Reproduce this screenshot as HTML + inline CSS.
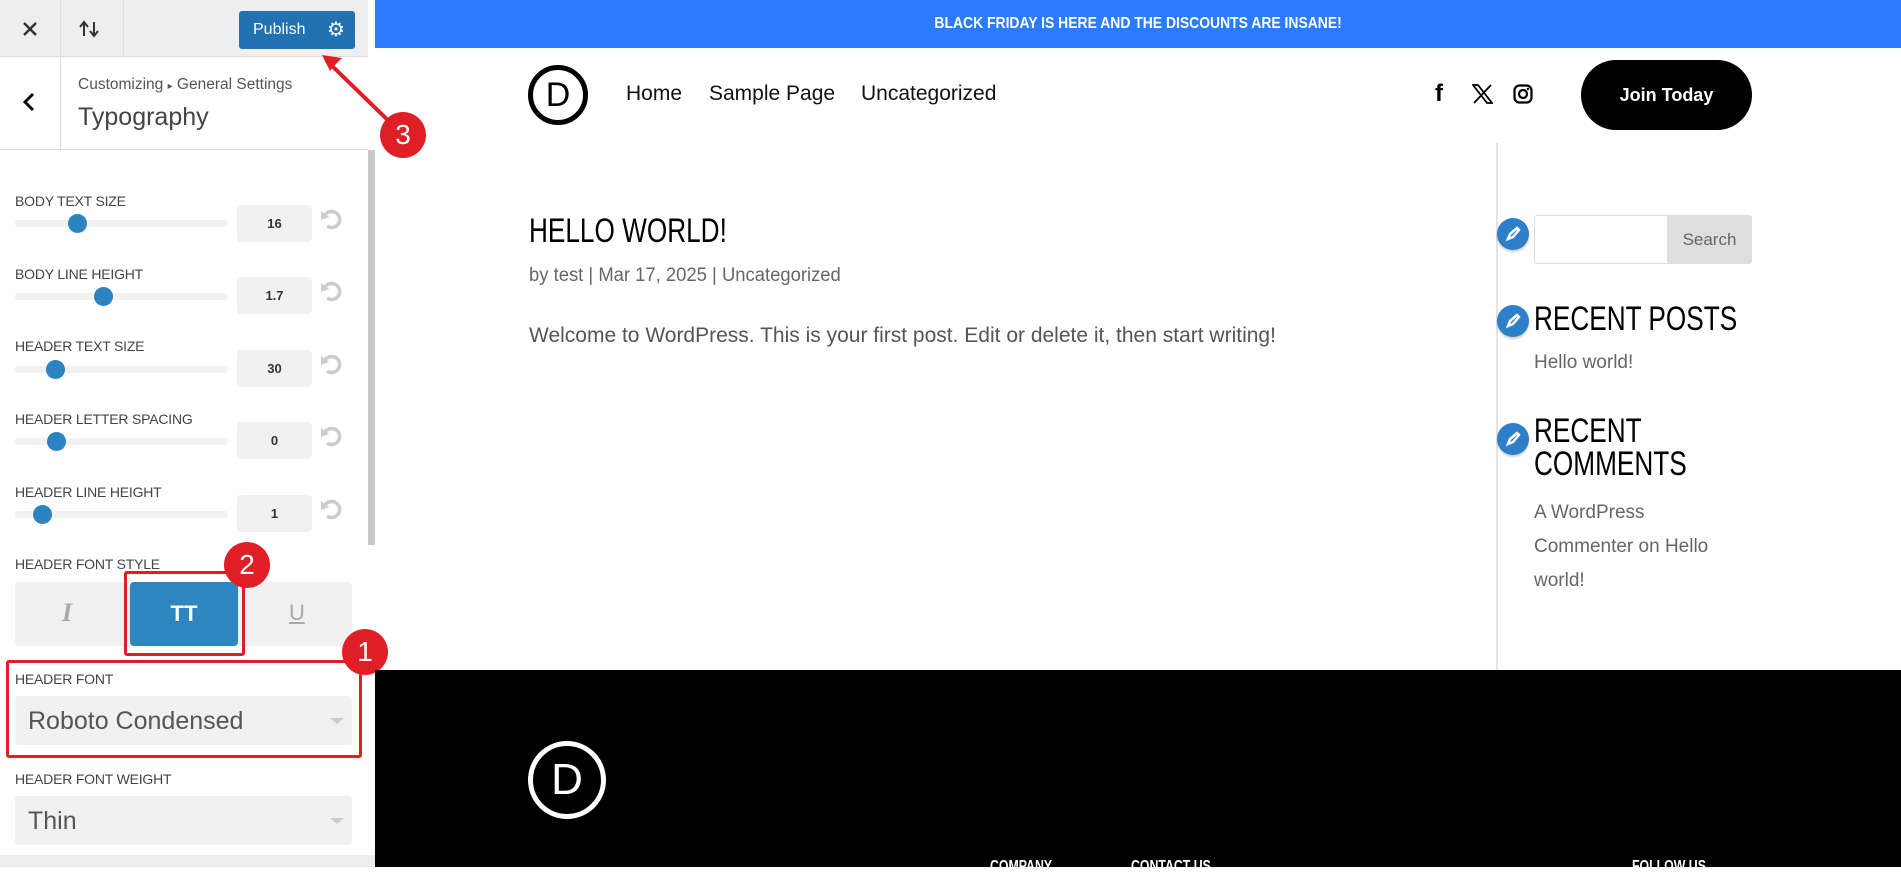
<!DOCTYPE html>
<html><head><meta charset="utf-8"><style>
*{margin:0;padding:0;box-sizing:border-box}
body{width:1901px;height:867px;overflow:hidden;position:relative;font-family:"Liberation Sans",sans-serif;background:#fff}
.a{position:absolute}
.lbl{position:absolute;left:15px;font-size:14px;color:#444;text-transform:uppercase;letter-spacing:-.2px}
.trk{position:absolute;left:15px;width:213px;height:7px;border-radius:4px;background:#f1f1f1}
.th{position:absolute;width:19px;height:19px;border-radius:50%;background:#2b83c0;top:-6px}
.val{position:absolute;left:237px;width:75px;height:37px;background:#f1f1f1;border-radius:4px;font-size:13px;font-weight:bold;color:#333;text-align:center;line-height:37px}
.sq{transform:scaleX(.77);transform-origin:0 0;white-space:nowrap}
.pen{position:absolute;left:1497px;width:32px;height:32px;border-radius:50%;background:#2e7fc9;box-shadow:0 2px 2px rgba(0,0,0,.2)}
.badge{position:absolute;width:46px;height:46px;border-radius:50%;background:#e01e25;color:#fff;font-size:28px;text-align:center;line-height:46px}
</style></head><body>
<div class="a" style="left:0;top:0;width:375px;height:867px;background:#fff"></div>
<div class="a" style="left:0;top:0;width:368px;height:57px;background:#eeeeee;border-bottom:1px solid #ddd"></div>
<div class="a" style="left:60px;top:0;width:1px;height:57px;background:#ddd"></div>
<div class="a" style="left:123px;top:0;width:1px;height:57px;background:#ddd"></div>
<svg class="a" style="left:22px;top:21px" width="16" height="16"><path d="M2 2L14 14M14 2L2 14" stroke="#333" stroke-width="2.5"/></svg>
<svg class="a" style="left:79px;top:20px" width="24" height="18"><path d="M5 16V3M1 7l4-5 4 5M15 2v13M11 11l4 5 4-5" stroke="#333" stroke-width="2" fill="none"/></svg>
<div class="a" style="left:239px;top:11px;width:116px;height:38px;background:#2271b1;border-radius:3px"></div>
<div class="a" style="left:253px;top:21px;color:#fff;font-size:16px">Publish</div>
<div class="a" style="left:327px;top:17px;color:#fff;font-size:20px">⚙</div>
<div class="a" style="left:0;top:57px;width:368px;height:93px;background:#fff;border-bottom:1px solid #ddd"></div>
<div class="a" style="left:60px;top:57px;width:1px;height:93px;background:#ddd"></div>
<svg class="a" style="left:22px;top:92px" width="14" height="20"><path d="M11 2L3 10l8 8" stroke="#111" stroke-width="3" fill="none"/></svg>
<div class="a" style="left:78px;top:76px;font-size:15.5px;color:#555">Customizing <span style="font-size:10px">▸</span> General Settings</div>
<div class="a" style="left:78px;top:103px;font-size:25px;color:#444">Typography</div>
<div class="a" style="left:368px;top:150px;width:7px;height:395px;background:#c9c9c9"></div>

<div class="lbl" style="top:193px">Body Text Size</div>
<div class="trk" style="top:220px"><div class="th" style="left:53px"></div></div>
<div class="val" style="top:205px">16</div>
<div class="lbl" style="top:266px">Body Line Height</div>
<div class="trk" style="top:293px"><div class="th" style="left:79px"></div></div>
<div class="val" style="top:277px">1.7</div>
<div class="lbl" style="top:338px">Header Text Size</div>
<div class="trk" style="top:366px"><div class="th" style="left:31px"></div></div>
<div class="val" style="top:350px">30</div>
<div class="lbl" style="top:411px">Header Letter Spacing</div>
<div class="trk" style="top:438px"><div class="th" style="left:32px"></div></div>
<div class="val" style="top:422px">0</div>
<div class="lbl" style="top:484px">Header Line Height</div>
<div class="trk" style="top:511px"><div class="th" style="left:18px"></div></div>
<div class="val" style="top:495px">1</div>
<svg class="a" style="left:320px;top:209px" width="26" height="320"><g fill="none" stroke="#ccc" stroke-width="3.5"><path d="M5 6a8 8 0 1 1 2 11"/><path d="M5 78a8 8 0 1 1 2 11"/><path d="M5 151a8 8 0 1 1 2 11"/><path d="M5 223a8 8 0 1 1 2 11"/><path d="M5 296a8 8 0 1 1 2 11"/></g><g fill="#ccc"><path d="M1 2l8 6-8 3z"/><path d="M1 74l8 6-8 3z"/><path d="M1 147l8 6-8 3z"/><path d="M1 219l8 6-8 3z"/><path d="M1 292l8 6-8 3z"/></g></svg>

<div class="lbl" style="top:556px">Header Font Style</div>
<div class="a" style="left:15px;top:582px;width:337px;height:64px;background:#f1f1f1;border-radius:4px"></div>
<div class="a" style="left:62px;top:598px;font-size:26px;color:#aaa;font-style:italic;font-weight:bold;font-family:'Liberation Serif',serif">I</div>
<div class="a" style="left:130px;top:582px;width:108px;height:64px;background:#2e86c1;border-radius:4px;color:#fff;font-weight:bold;font-size:22px;text-align:center;line-height:64px">TT</div>
<div class="a" style="left:289px;top:600px;font-size:22px;color:#aaa;text-decoration:underline">U</div>
<div class="a" style="left:124px;top:571px;width:121px;height:85px;border:3px solid #e01e25;border-radius:3px"></div>
<div class="badge" style="left:224px;top:542px">2</div>

<div class="lbl" style="top:671px">Header Font</div>
<div class="a" style="left:15px;top:696px;width:337px;height:49px;background:#f1f1f1;border-radius:3px"></div>
<div class="a" style="left:28px;top:707px;font-size:25px;color:#555">Roboto Condensed</div>
<div class="a" style="left:330px;top:718px;border:7px solid transparent;border-top:6px solid #ccc"></div>
<div class="a" style="left:6px;top:660px;width:356px;height:98px;border:3px solid #e01e25;border-radius:3px"></div>
<div class="badge" style="left:342px;top:629px">1</div>

<div class="lbl" style="top:771px">Header Font Weight</div>
<div class="a" style="left:15px;top:796px;width:337px;height:49px;background:#f1f1f1;border-radius:3px"></div>
<div class="a" style="left:28px;top:807px;font-size:25px;color:#555">Thin</div>
<div class="a" style="left:330px;top:818px;border:7px solid transparent;border-top:6px solid #ccc"></div>
<div class="a" style="left:0;top:855px;width:375px;height:12px;background:#eee"></div>

<div class="a" style="left:375px;top:0;width:1526px;height:48px;background:#2b7bff;color:#fff;font-weight:bold;font-size:16px;text-align:center;line-height:48px"><span style="display:inline-block;transform:scaleX(.87)">BLACK FRIDAY IS HERE AND THE DISCOUNTS ARE INSANE!</span></div>
<div class="a" style="left:528px;top:65px;width:60px;height:60px;border:5px solid #000;border-radius:50%;text-align:center;font-size:34px;line-height:50px">D</div>
<div class="a" style="left:626px;top:82px;font-size:21px;color:#111">Home</div>
<div class="a" style="left:709px;top:82px;font-size:21px;color:#111">Sample Page</div>
<div class="a" style="left:861px;top:82px;font-size:21px;color:#111">Uncategorized</div>
<div class="a" style="left:1435px;top:80px;font-size:24px;font-weight:bold">f</div>
<svg class="a" style="left:1472px;top:84px" width="21" height="20"><path d="M1 1h5l14 18h-5zM19 1L2 19" stroke="#000" stroke-width="1.8" fill="none"/></svg>
<svg class="a" style="left:1513px;top:84px" width="20" height="20"><rect x="1.5" y="1.5" width="17" height="17" rx="5" stroke="#000" stroke-width="2.2" fill="none"/><circle cx="10" cy="10" r="4" stroke="#000" stroke-width="2.2" fill="none"/><circle cx="15" cy="5" r="1.2"/></svg>
<div class="a" style="left:1581px;top:60px;width:171px;height:70px;background:#000;border-radius:35px;color:#fff;font-weight:bold;font-size:18px;text-align:center;line-height:70px">Join Today</div>

<div class="a" style="left:1496px;top:143px;width:2px;height:527px;background:#e4e4e4"></div>
<div class="a sq" style="left:529px;top:212px;font-size:34px;color:#000">HELLO WORLD!</div>
<div class="a" style="left:529px;top:265px;font-size:19px;color:#666;transform:scaleX(.97);transform-origin:0 0">by test | Mar 17, 2025 | Uncategorized</div>
<div class="a" style="left:529px;top:324px;font-size:21px;color:#555">Welcome to WordPress. This is your first post. Edit or delete it, then start writing!</div>

<div class="a" style="left:1534px;top:215px;width:218px;height:49px;border:1px solid #ddd;border-radius:3px"></div>
<div class="a" style="left:1667px;top:215px;width:85px;height:49px;background:#dedede;border-radius:0 3px 3px 0;color:#666;font-size:17px;text-align:center;line-height:49px">Search</div>
<div class="pen" style="top:218px"></div>
<div class="pen" style="top:305px"></div>
<div class="pen" style="top:423px"></div>
<svg class="a" style="left:1505px;top:226px" width="16" height="220"><g stroke="#fff" stroke-width="2.5" fill="none"><path d="M3 13l2-5 7-6 2 2-6 7z"/><path d="M3 100l2-5 7-6 2 2-6 7z"/><path d="M3 218l2-5 7-6 2 2-6 7z"/></g></svg>
<div class="a sq" style="left:1534px;top:300px;font-size:34px;color:#000">RECENT POSTS</div>
<div class="a" style="left:1534px;top:352px;font-size:19px;color:#666">Hello world!</div>
<div class="a sq" style="left:1534px;top:415px;font-size:34px;color:#000;line-height:33px">RECENT<br>COMMENTS</div>
<div class="a" style="left:1534px;top:496px;font-size:19px;color:#666;line-height:34px">A WordPress<br>Commenter on Hello<br>world!</div>

<div class="a" style="left:375px;top:670px;width:1526px;height:197px;background:#000"></div>
<div class="a" style="left:528px;top:741px;width:78px;height:78px;border:5px solid #fff;border-radius:50%;color:#fff;text-align:center;font-size:44px;line-height:68px">D</div>
<div class="a sq" style="left:990px;top:858px;color:#fff;font-size:16px;font-weight:bold">COMPANY</div>
<div class="a sq" style="left:1131px;top:858px;color:#fff;font-size:16px;font-weight:bold">CONTACT US</div>
<div class="a sq" style="left:1632px;top:858px;color:#fff;font-size:16px;font-weight:bold">FOLLOW US</div>

<svg class="a" style="left:310px;top:40px" width="110" height="100"><path d="M88 90L16 20" stroke="#e01e25" stroke-width="4"/><path d="M12 15l20 3-4 4-5 5-3 4z" fill="#e01e25"/></svg>
<div class="badge" style="left:380px;top:112px">3</div>
</body></html>
